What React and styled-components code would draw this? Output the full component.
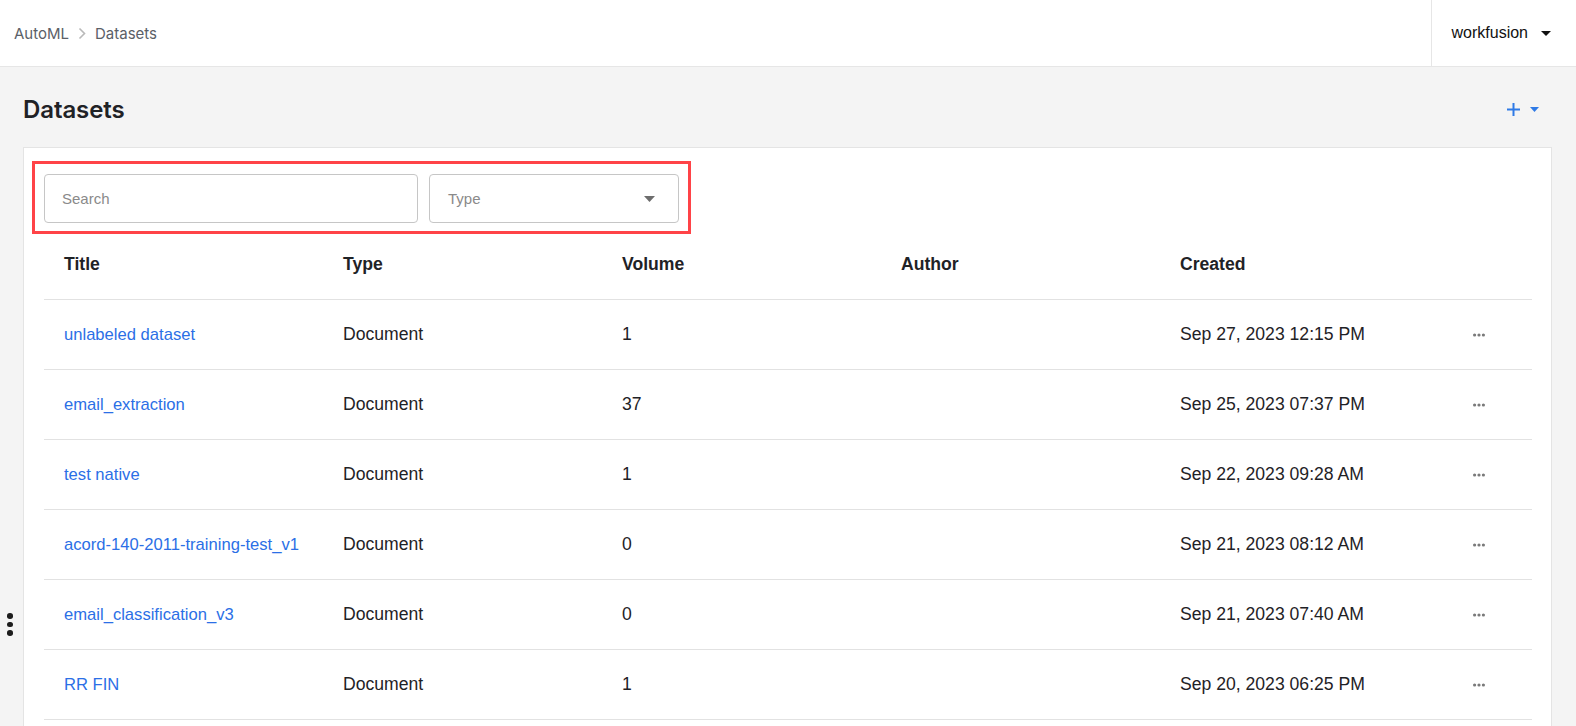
import React from 'react';
import styled, { createGlobalStyle } from 'styled-components';

const GlobalStyle = createGlobalStyle`
  html, body {
    margin: 0;
    padding: 0;
    background: #f4f4f4;
  }
  * {
    box-sizing: border-box;
  }
`;

const colors = {
  BG: '#f4f4f4',
  WHITE: '#ffffff',
  LINE: '#e2e2e2',
  TEXT: '#1f2226',
  LINK: '#2b6fe6',
  MUTED: '#5b6067',
};

const rows = [
  { title: 'unlabeled dataset', type: 'Document', volume: '1', created: 'Sep 27, 2023 12:15 PM' },
  { title: 'email_extraction', type: 'Document', volume: '37', created: 'Sep 25, 2023 07:37 PM' },
  { title: 'test native', type: 'Document', volume: '1', created: 'Sep 22, 2023 09:28 AM' },
  { title: 'acord-140-2011-training-test_v1', type: 'Document', volume: '0', created: 'Sep 21, 2023 08:12 AM' },
  { title: 'email_classification_v3', type: 'Document', volume: '0', created: 'Sep 21, 2023 07:40 AM' },
  { title: 'RR FIN', type: 'Document', volume: '1', created: 'Sep 20, 2023 06:25 PM' },
];

const Page = styled.div`
  position: relative;
  height: 100vh;
  overflow: hidden;
  background: ${colors.BG};
`;

const TopBar = styled.header`
  display: flex;
  align-items: stretch;
  justify-content: space-between;
  height: 67px;
  background: ${colors.WHITE};
  border-bottom: 1px solid #e6e6e6;
`;

const Breadcrumbs = styled.nav`
  display: flex;
  align-items: center;
  gap: 9px;
  padding-left: 14px;
  font-family: Inter, "Liberation Sans", sans-serif;
  font-size: 15px;
  color: ${colors.MUTED};
`;

const Crumb = styled.span`
  color: ${colors.MUTED};
`;

const UserMenu = styled.div`
  display: flex;
  align-items: center;
  gap: 13px;
  padding: 0 25px 0 20px;
  border-left: 1px solid #e6e6e6;
  font-family: "Liberation Sans", Arial, sans-serif;
  font-size: 16px;
  color: #111;
`;

const TitleRow = styled.div`
  display: flex;
  align-items: center;
  justify-content: space-between;
  height: 80px;
  padding: 4px 37px 0 23px;
`;

const PageTitle = styled.h1`
  margin: 0;
  font-family: Inter, "Liberation Sans", sans-serif;
  font-size: 24px;
  font-weight: 600;
  color: ${colors.TEXT};
  letter-spacing: -0.1px;
`;

const AddButton = styled.button`
  display: flex;
  align-items: center;
  gap: 10px;
  padding: 0;
  border: 0;
  background: none;
  cursor: pointer;
`;

const Card = styled.section`
  margin: 0 24px 0 23px;
  padding: 26px 19px 20px 20px;
  background: ${colors.WHITE};
  border: 1px solid #e4e4e4;
`;

const Filters = styled.div`
  position: relative;
  display: flex;
  gap: 11px;
`;

const Highlight = styled.div`
  position: absolute;
  left: -12px;
  top: -13px;
  width: 659px;
  height: 73px;
  border: 3px solid #ff4347;
  pointer-events: none;
`;

const Field = styled.div`
  display: flex;
  align-items: center;
  justify-content: space-between;
  width: ${(p) => p.width}px;
  height: 49px;
  padding: 0 23px 0 ${(p) => p.pad}px;
  border: 1px solid #c6c6c6;
  border-radius: 4px;
  font-family: "Liberation Sans", Arial, sans-serif;
  font-size: 15px;
  color: #8a8a8a;
`;

const Grid = styled.div`
  display: grid;
  grid-template-columns: repeat(5, 279px) 1fr;
  font-family: "Liberation Sans", Arial, sans-serif;
`;

const HeadCell = styled.div`
  padding: 30px 0 24px 20px;
  line-height: 22px;
  font-size: 17.6px;
  font-weight: 700;
  color: ${colors.TEXT};
  border-bottom: 1px solid ${colors.LINE};
`;

const Cell = styled.div`
  display: flex;
  align-items: center;
  height: 70px;
  padding-left: ${(p) => p.pad || 20}px;
  font-size: 17.6px;
  color: ${colors.TEXT};
  border-bottom: 1px solid ${colors.LINE};
`;

const TitleLink = styled.a`
  font-size: 16.6px;
  color: ${colors.LINK};
  text-decoration: none;
  cursor: pointer;
`;

const SideHandle = styled.div`
  position: absolute;
  left: 7px;
  top: 613px;
  display: flex;
  flex-direction: column;
  gap: 3px;
`;

const Dot = styled.span`
  width: 5.6px;
  height: 5.6px;
  border-radius: 50%;
  background: #1c1c1c;
`;

const Chevron = () => (
  <svg width="8" height="13" viewBox="0 0 8 13">
    <path d="M1.5 1.5 L6.5 6.5 L1.5 11.5" fill="none" stroke="#b9b9b9" strokeWidth="1.6" />
  </svg>
);

const Caret = ({ color, w = 10, h = 5 }) => (
  <svg width={w} height={h} viewBox={`0 0 ${w} ${h}`}>
    <path d={`M0 0 L${w} 0 L${w / 2} ${h} Z`} fill={color} />
  </svg>
);

const Plus = () => (
  <svg width="13" height="13" viewBox="0 0 13 13">
    <path d="M6.5 0 V13 M0 6.5 H13" stroke="#2f7ae6" strokeWidth="2" />
  </svg>
);

const MoreDots = () => (
  <svg width="12" height="4" viewBox="0 0 12 4">
    <circle cx="1.6" cy="2" r="1.6" fill="#7a7a7a" />
    <circle cx="6" cy="2" r="1.6" fill="#7a7a7a" />
    <circle cx="10.4" cy="2" r="1.6" fill="#7a7a7a" />
  </svg>
);

const App = () => (
  <Page>
    <GlobalStyle />
    <TopBar>
      <Breadcrumbs>
        <Crumb>AutoML</Crumb>
        <Chevron />
        <Crumb>Datasets</Crumb>
      </Breadcrumbs>
      <UserMenu>
        workfusion
        <Caret color="#111" />
      </UserMenu>
    </TopBar>

    <TitleRow>
      <PageTitle>Datasets</PageTitle>
      <AddButton>
        <Plus />
        <Caret color="#2f7ae6" w={9} h={5} />
      </AddButton>
    </TitleRow>

    <Card>
      <Filters>
        <Highlight />
        <Field width={374} pad={17}>Search</Field>
        <Field width={250} pad={18}>
          Type
          <Caret color="#6d6d6d" w={11} h={6} />
        </Field>
      </Filters>

      <Grid>
        <HeadCell>Title</HeadCell>
        <HeadCell>Type</HeadCell>
        <HeadCell>Volume</HeadCell>
        <HeadCell>Author</HeadCell>
        <HeadCell>Created</HeadCell>
        <HeadCell />
        {rows.map((r) => (
          <React.Fragment key={r.title}>
            <Cell>
              <TitleLink>{r.title}</TitleLink>
            </Cell>
            <Cell>{r.type}</Cell>
            <Cell>{r.volume}</Cell>
            <Cell />
            <Cell>{r.created}</Cell>
            <Cell pad={34}>
              <MoreDots />
            </Cell>
          </React.Fragment>
        ))}
      </Grid>
    </Card>

    <SideHandle>
      <Dot />
      <Dot />
      <Dot />
    </SideHandle>
  </Page>
);

export default App;
